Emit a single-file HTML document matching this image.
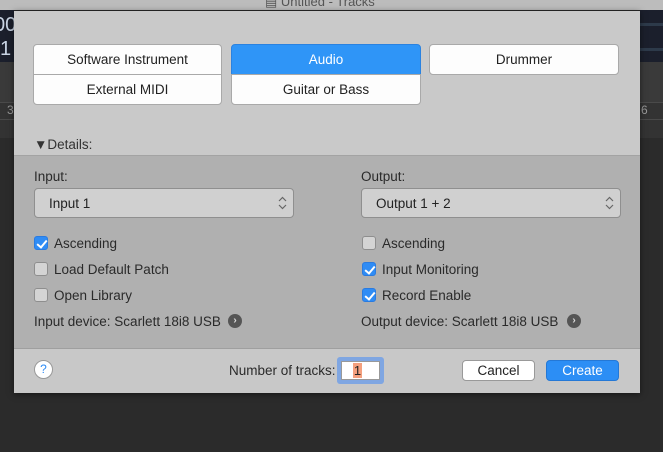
<!DOCTYPE html>
<html><head><meta charset="utf-8"><style>
*{box-sizing:border-box;margin:0;padding:0}
body{width:663px;height:452px;background:#2b2b2b;position:relative;overflow:hidden;font-family:"Liberation Sans",sans-serif;font-size:13.5px;color:#222}
.abs{position:absolute}
.btn{position:absolute;background:#fdfdfd;border:1px solid #a9a9a9;text-align:center;line-height:30px;font-size:13.5px;color:#222}
.cb{position:absolute;width:14px;height:14px;border:1px solid #8e8e8e;border-radius:3px;background:#d4d4d4}
.cb.on{background:#2f8cf5;border-color:#2a7be0}
.cb.on::after{content:"";position:absolute;left:4px;top:1px;width:4px;height:8px;border:solid #fff;border-width:0 2px 2px 0;transform:rotate(40deg)}
.lbl{position:absolute;font-size:13.5px;color:#2a2a2a}
.sel{position:absolute;height:30px;border:1px solid #8f8f8f;border-radius:4px;background:#d0d0d0;line-height:29px;padding-left:14px;font-size:13.5px}
.arr{position:absolute;right:6px;top:7px;width:9px;height:14px}
.dev{position:absolute;width:14px;height:14px;border-radius:50%;background:#555;color:#ddd;font-size:10px;line-height:14px;text-align:center;font-weight:bold}
</style></head><body>
<div class="abs" style="left:0;top:0;width:663px;height:10px;background:#bcbcbc"></div>
<div class="abs" style="left:265px;top:-6px;font-size:13px;color:#555">▤ Untitled - Tracks</div>
<div class="abs" style="left:0;top:10px;width:663px;height:52px;background:#1b1f2c"></div>
<div class="abs" style="left:640px;top:23px;width:23px;height:3px;background:#2d3a4a"></div>
<div class="abs" style="left:640px;top:48px;width:23px;height:3px;background:#2d3a4a"></div>
<div class="abs" style="left:-6px;top:14px;color:#c9d4e4;font-size:20px">00</div>
<div class="abs" style="left:0;top:38px;color:#c9d4e4;font-size:20px">1</div>
<div class="abs" style="left:0;top:62px;width:663px;height:40px;background:#3a3a3a"></div>
<div class="abs" style="left:0;top:102px;width:663px;height:36px;background:#333;border-top:1px solid #4a4a4a"></div>
<div class="abs" style="left:0;top:119px;width:663px;height:1px;background:#4a4a4a"></div>
<div class="abs" style="left:7px;top:103px;color:#999;font-size:12px">3</div>
<div class="abs" style="left:641px;top:103px;color:#999;font-size:12px">6</div>
<div class="abs" style="left:0;top:138px;width:663px;height:314px;background:#2b2b2b"></div>

<div class="abs" style="left:14px;top:10px;width:626px;height:382px;background:#c9c9c9;border-top:1px solid #222;box-shadow:0 2px 6px rgba(0,0,0,.5)">
 <div class="abs" style="left:0;top:144px;width:626px;height:193px;background:#b0b0b0;border-top:1px solid #a3a3a3"></div>
 <div class="abs" style="left:0;top:337px;width:626px;height:45px;background:#c8c8c8;border-top:1px solid #9f9f9f"></div>
</div>

<div class="btn" style="left:33px;top:44px;width:189px;height:31px;border-radius:4px 4px 0 0">Software Instrument</div>
<div class="btn" style="left:33px;top:74px;width:189px;height:31px;border-radius:0 0 4px 4px">External MIDI</div>
<div class="btn" style="left:231px;top:44px;width:190px;height:31px;border-radius:4px 4px 0 0;background:#2f95f7;border-color:#2a82e0;color:#fff">Audio</div>
<div class="btn" style="left:231px;top:74px;width:190px;height:31px;border-radius:0 0 4px 4px">Guitar or Bass</div>
<div class="btn" style="left:429px;top:44px;width:190px;height:31px;border-radius:4px">Drummer</div>

<div class="lbl" style="left:34px;top:137px;color:#333">▼Details:</div>

<div class="lbl" style="left:34px;top:169px">Input:</div>
<div class="sel" style="left:34px;top:188px;width:260px">Input 1<svg class="arr" viewBox="0 0 9 14"><path d="M1 5L4.5 1.5L8 5M1 9L4.5 12.5L8 9" fill="none" stroke="#666" stroke-width="1.2"/></svg></div>
<div class="lbl" style="left:361px;top:169px">Output:</div>
<div class="sel" style="left:361px;top:188px;width:260px">Output 1 + 2<svg class="arr" viewBox="0 0 9 14"><path d="M1 5L4.5 1.5L8 5M1 9L4.5 12.5L8 9" fill="none" stroke="#666" stroke-width="1.2"/></svg></div>

<div class="cb on" style="left:34px;top:236px"></div><div class="lbl" style="left:54px;top:236px">Ascending</div>
<div class="cb" style="left:34px;top:262px"></div><div class="lbl" style="left:54px;top:262px">Load Default Patch</div>
<div class="cb" style="left:34px;top:288px"></div><div class="lbl" style="left:54px;top:288px">Open Library</div>
<div class="cb" style="left:362px;top:236px"></div><div class="lbl" style="left:382px;top:236px">Ascending</div>
<div class="cb on" style="left:362px;top:262px"></div><div class="lbl" style="left:382px;top:262px">Input Monitoring</div>
<div class="cb on" style="left:362px;top:288px"></div><div class="lbl" style="left:382px;top:288px">Record Enable</div>

<div class="lbl" style="left:34px;top:314px">Input device: Scarlett 18i8 USB</div>
<div class="dev" style="left:228px;top:314px">›</div>
<div class="lbl" style="left:361px;top:314px">Output device: Scarlett 18i8 USB</div>
<div class="dev" style="left:567px;top:314px">›</div>

<div class="abs" style="left:34px;top:360px;width:19px;height:19px;border-radius:50%;background:#fff;border:1px solid #999;color:#2f8cf5;text-align:center;line-height:17px;font-size:12px">?</div>
<div class="lbl" style="left:229px;top:363px">Number of tracks:</div>
<div class="abs" style="left:337px;top:357px;width:47px;height:27px;border-radius:3px;background:#7fa6e2"></div>
<div class="abs" style="left:341px;top:361px;width:39px;height:19px;background:#fff;border:1px solid #999"></div>
<div class="abs" style="left:353px;top:363px;width:9px;height:15px;background:#f4a07e;font-size:13px;line-height:15px;text-align:center">1</div>
<div class="abs" style="left:462px;top:360px;width:73px;height:21px;background:#fff;border:1px solid #999;border-radius:4px;text-align:center;line-height:19px;font-size:13.5px">Cancel</div>
<div class="abs" style="left:546px;top:360px;width:73px;height:21px;background:#2c8ef5;border:1px solid #2478d6;border-radius:4px;text-align:center;line-height:19px;font-size:13.5px;color:#fff">Create</div>
</body></html>
